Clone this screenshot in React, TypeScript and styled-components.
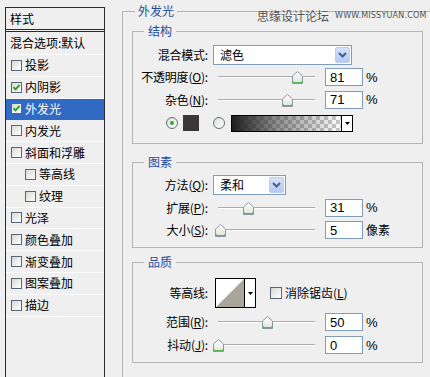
import React from 'react';
import styled, { createGlobalStyle } from 'styled-components';

const GlobalStyle = createGlobalStyle`
  html, body { margin: 0; padding: 0; background: #efefef; overflow: hidden; }
  body { font-family: "Noto Sans CJK SC", "Liberation Sans", sans-serif; font-size: 12px; color: #000; }
`;

const Window = styled.div`
  position: relative;
  display: flex;
  align-items: flex-start;
  width: 430px;
  height: 377px;
  overflow: hidden;
`;

/* ---------- left style list ---------- */
const StylePanel = styled.div`
  flex: none;
  margin: 7px 0 0 5px;
  width: 100px;
  height: 380px;
  box-sizing: border-box;
  border: 1px solid #2b2b2b;
  background: #efefef;
`;

const PanelHeader = styled.div`
  height: 24px;
  box-sizing: border-box;
  border-bottom: 3px double #2b2b2b;
  display: flex;
  align-items: center;
  padding-left: 4px;
  line-height: 1;
`;

const BlendRow = styled.div`
  height: 23px;
  box-sizing: border-box;
  display: flex;
  align-items: center;
  padding-left: 4px;
  border-bottom: 1px solid #fbfbfb;
  line-height: 1;
`;

const PanelItem = styled.div<{ $selected?: boolean; $indent?: boolean }>`
  height: 21.8px;
  box-sizing: border-box;
  display: flex;
  align-items: center;
  gap: 3px;
  padding-left: ${p => (p.$indent ? 19 : 5)}px;
  border-bottom: 1px solid ${p => (p.$selected ? '#316ac5' : '#fbfbfb')};
  background: ${p => (p.$selected ? '#316ac5' : 'transparent')};
  color: ${p => (p.$selected ? '#fff' : '#000')};
  line-height: 1;
`;

const CheckBox = styled.span<{ $size?: number }>`
  flex: none;
  width: ${p => p.$size ?? 11}px;
  height: ${p => p.$size ?? 11}px;
  box-sizing: border-box;
  border: 1px solid #56677a;
  background: linear-gradient(135deg, #d8d8d2 0%, #f4f4f2 70%, #ffffff 100%);
  display: flex;
  align-items: center;
  justify-content: center;
`;

const Check: React.FC<{ checked?: boolean; size?: number }> = ({ checked, size }) => (
  <CheckBox $size={size}>
    {checked && (
      <svg width="9" height="9" viewBox="0 0 9 9">
        <path d="M1.5 4.2 L3.6 6.4 L7.6 1.8" fill="none" stroke="#22a022" strokeWidth="1.8" />
      </svg>
    )}
  </CheckBox>
);

/* ---------- right effect pane ---------- */
const EffectPane = styled.fieldset`
  flex: none;
  box-sizing: border-box;
  width: 320px;
  margin: 3px 0 0 17px;
  padding: 4px 0 20px 9px;
  border: 1px solid #b4b4b4;
  min-width: 0;
`;

const Legend = styled.legend<{ $inset: number; $pad: number }>`
  margin-left: ${p => p.$inset}px;
  padding: 0 ${p => p.$pad}px;
  color: #1d4c9c;
  font-size: 12px;
  line-height: 16px;
`;

const Group = styled.fieldset<{ $top: number; $pt: number; $pb: number }>`
  box-sizing: border-box;
  width: 291px;
  margin: ${p => p.$top}px 0 0 0;
  padding: ${p => p.$pt}px 0 ${p => p.$pb}px 0;
  border: 1px solid #b4b4b4;
  min-width: 0;
`;

const FieldRow = styled.div<{ $h: number; $pl?: number }>`
  display: flex;
  align-items: center;
  height: ${p => p.$h}px;
  padding-left: ${p => p.$pl ?? 0}px;
`;

const FieldLabel = styled.label`
  flex: none;
  width: 75px;
  text-align: right;
  white-space: nowrap;
  line-height: 1;
  letter-spacing: -0.2px;
`;

const Select = styled.div<{ $w: number }>`
  flex: none;
  width: ${p => p.$w}px;
  height: 20px;
  margin-left: 5px;
  box-sizing: border-box;
  border: 1px solid #7f9db9;
  background: #fff;
  display: flex;
  align-items: center;
`;

const SelectText = styled.span`
  flex: 1;
  padding-left: 6px;
  line-height: 1;
`;

const SelectButton = styled.span`
  flex: none;
  width: 15px;
  height: 16px;
  margin-right: 1px;
  box-sizing: border-box;
  border: 1px solid #bccdf3;
  border-radius: 2px;
  background: linear-gradient(#d6e2fc, #b4c9f4);
  display: flex;
  align-items: center;
  justify-content: center;
`;

const SliderBox = styled.div`
  flex: none;
  position: relative;
  width: 106px;
  height: 14px;
  margin-left: 5px;
  &::before {
    content: '';
    position: absolute;
    left: 5px;
    right: 4px;
    top: 6px;
    height: 1px;
    background: #ababab;
    border-bottom: 1px solid #fff;
  }
`;

const Thumb = styled.svg`
  position: absolute;
  top: 1px;
`;

const NumberInput = styled.input`
  flex: none;
  width: 38px;
  height: 18px;
  margin: 0 0 0 6px;
  box-sizing: border-box;
  border: 1px solid #7f9db9;
  background: #fff;
  padding: 0 0 0 4px;
  font: 13px "Liberation Sans", Arial, sans-serif;
  color: #000;
  outline: none;
`;

const Unit = styled.span<{ $latin?: boolean }>`
  margin-left: 3px;
  font-family: ${p => (p.$latin ? '"Liberation Sans", Arial, sans-serif' : '"Noto Sans CJK SC", sans-serif')};
  font-size: ${p => (p.$latin ? 13 : 12)}px;
  line-height: 1;
`;

const Radio = styled.span<{ $on?: boolean; $ml: number }>`
  flex: none;
  width: 12px;
  height: 12px;
  margin-left: ${p => p.$ml}px;
  box-sizing: border-box;
  border: 1px solid #62717f;
  border-radius: 50%;
  background: linear-gradient(135deg, #dcdcd6, #ffffff);
  display: flex;
  align-items: center;
  justify-content: center;
  &::after {
    content: '';
    width: 4px;
    height: 4px;
    border-radius: 50%;
    background: ${p => (p.$on ? '#3aa53a' : 'transparent')};
  }
`;

const Swatch = styled.span`
  flex: none;
  width: 16px;
  height: 16px;
  margin-left: 5px;
  background: #3b3737;
`;

const GradientPicker = styled.div`
  flex: none;
  width: 122px;
  height: 17px;
  margin-left: 6px;
  box-sizing: border-box;
  border: 1px solid #000;
  display: flex;
`;

const GradientStrip = styled.div`
  flex: 1;
  background:
    linear-gradient(90deg, rgba(30, 30, 30, 1) 0%, rgba(60, 60, 60, 0.6) 40%, rgba(255, 255, 255, 0) 100%),
    repeating-conic-gradient(#c8c8c8 0% 25%, #ffffff 0% 50%) 0 0 / 8px 8px;
`;

const DropArrow = styled.div`
  flex: none;
  width: 11px;
  box-sizing: border-box;
  border-left: 1px solid #000;
  background: #fff;
  display: flex;
  align-items: center;
  justify-content: center;
`;

const ContourPicker = styled.div`
  flex: none;
  width: 41px;
  height: 30px;
  margin-left: 7px;
  box-sizing: border-box;
  border: 1px solid #000;
  display: flex;
`;

const ContourPreview = styled.svg`
  flex: none;
  display: block;
`;

const CheckLabel = styled.span`
  margin-left: 3px;
  line-height: 1;
`;

const Watermark = styled.div`
  position: absolute;
  left: 257px;
  top: 9px;
  display: flex;
  align-items: center;
  gap: 6px;
  color: #545454;
  pointer-events: none;
`;

const WatermarkCn = styled.span`
  font-size: 12px;
  line-height: 14px;
`;

const WatermarkUrl = styled.span`
  font-family: "DejaVu Sans", sans-serif;
  font-size: 8px;
  letter-spacing: 0.2px;
  line-height: 14px;
`;

/* ---------- pieces ---------- */
const Chevron = () => (
  <svg width="9" height="6" viewBox="0 0 9 6">
    <path d="M1 1 L4.5 4.5 L8 1" fill="none" stroke="#4a5f86" strokeWidth="2" />
  </svg>
);

const SmallTriangle = () => (
  <svg width="5" height="3" viewBox="0 0 5 3">
    <path d="M0 0 H5 L2.5 3 Z" fill="#000" />
  </svg>
);

const Slider: React.FC<{ fraction: number }> = ({ fraction }) => (
  <SliderBox>
    <Thumb width="11" height="13" viewBox="0 0 11 13" style={{ left: `${fraction * 97}px` }}>
      <defs>
        <linearGradient id="thumbFill" x1="0" y1="0" x2="0" y2="1">
          <stop offset="0" stopColor="#ffffff" />
          <stop offset="1" stopColor="#e2e2da" />
        </linearGradient>
      </defs>
      <path d="M5.5 0.5 L10.5 5 V12.5 H0.5 V5 Z" fill="url(#thumbFill)" stroke="#8a98a4" />
      <path d="M1 11.5 H10 M1 10 V11.5 M10 10 V11.5" stroke="#52bb52" strokeWidth="1.2" fill="none" />
    </Thumb>
  </SliderBox>
);

const U: React.FC<{ children: React.ReactNode }> = ({ children }) => <u>{children}</u>;

const items: { label: string; checked?: boolean; selected?: boolean; indent?: boolean }[] = [
  { label: '投影' },
  { label: '内阴影', checked: true },
  { label: '外发光', checked: true, selected: true },
  { label: '内发光' },
  { label: '斜面和浮雕' },
  { label: '等高线', indent: true },
  { label: '纹理', indent: true },
  { label: '光泽' },
  { label: '颜色叠加' },
  { label: '渐变叠加' },
  { label: '图案叠加' },
  { label: '描边' },
];

export default function App() {
  return (
    <>
      <GlobalStyle />
      <Window>
        <StylePanel>
          <PanelHeader>样式</PanelHeader>
          <BlendRow>混合选项:默认</BlendRow>
          {items.map(it => (
            <PanelItem key={it.label} $selected={it.selected} $indent={it.indent}>
              <Check checked={it.checked} />
              <span>{it.label}</span>
            </PanelItem>
          ))}
        </StylePanel>

        <EffectPane>
          <Legend $inset={3} $pad={3}>外发光</Legend>

          <Group $top={0} $pt={5} $pb={8}>
            <Legend $inset={11} $pad={4}>结构</Legend>
            <FieldRow $h={22}>
              <FieldLabel>混合模式:</FieldLabel>
              <Select $w={139}>
                <SelectText>滤色</SelectText>
                <SelectButton><Chevron /></SelectButton>
              </Select>
            </FieldRow>
            <FieldRow $h={22}>
              <FieldLabel>不透明度(<U>O</U>):</FieldLabel>
              <Slider fraction={0.81} />
              <NumberInput readOnly value="81" />
              <Unit $latin>%</Unit>
            </FieldRow>
            <FieldRow $h={23}>
              <FieldLabel>杂色(<U>N</U>):</FieldLabel>
              <Slider fraction={0.71} />
              <NumberInput readOnly value="71" />
              <Unit $latin>%</Unit>
            </FieldRow>
            <FieldRow $h={24} $pl={33}>
              <Radio $on $ml={0} />
              <Swatch />
              <Radio $ml={14} />
              <GradientPicker>
                <GradientStrip />
                <DropArrow><SmallTriangle /></DropArrow>
              </GradientPicker>
            </FieldRow>
          </Group>

          <Group $top={10} $pt={4} $pb={6}>
            <Legend $inset={11} $pad={4}>图素</Legend>
            <FieldRow $h={22}>
              <FieldLabel>方法(<U>Q</U>):</FieldLabel>
              <Select $w={73}>
                <SelectText>柔和</SelectText>
                <SelectButton><Chevron /></SelectButton>
              </Select>
            </FieldRow>
            <FieldRow $h={23}>
              <FieldLabel>扩展(<U>P</U>):</FieldLabel>
              <Slider fraction={0.31} />
              <NumberInput readOnly value="31" />
              <Unit $latin>%</Unit>
            </FieldRow>
            <FieldRow $h={22}>
              <FieldLabel>大小(<U>S</U>):</FieldLabel>
              <Slider fraction={0.02} />
              <NumberInput readOnly value="5" />
              <Unit>像素</Unit>
            </FieldRow>
          </Group>

          <Group $top={6} $pt={6} $pb={6}>
            <Legend $inset={11} $pad={4}>品质</Legend>
            <FieldRow $h={34}>
              <FieldLabel>等高线:</FieldLabel>
              <ContourPicker>
                <ContourPreview width="28" height="28" viewBox="0 0 28 28">
                  <rect width="28" height="28" fill="#fff" />
                  <path d="M0 28 L28 0 V28 Z" fill="#a9a59b" />
                </ContourPreview>
                <DropArrow><SmallTriangle /></DropArrow>
              </ContourPicker>
              <span style={{ width: 14 }} />
              <Check size={12} />
              <CheckLabel>消除锯齿(<U>L</U>)</CheckLabel>
            </FieldRow>
            <FieldRow $h={24}>
              <FieldLabel>范围(<U>R</U>):</FieldLabel>
              <Slider fraction={0.5} />
              <NumberInput readOnly value="50" />
              <Unit $latin>%</Unit>
            </FieldRow>
            <FieldRow $h={22}>
              <FieldLabel>抖动(<U>J</U>):</FieldLabel>
              <Slider fraction={0} />
              <NumberInput readOnly value="0" />
              <Unit $latin>%</Unit>
            </FieldRow>
          </Group>
        </EffectPane>

        <Watermark>
          <WatermarkCn>思缘设计论坛</WatermarkCn>
          <WatermarkUrl>WWW.MISSYUAN.COM</WatermarkUrl>
        </Watermark>
      </Window>
    </>
  );
}
